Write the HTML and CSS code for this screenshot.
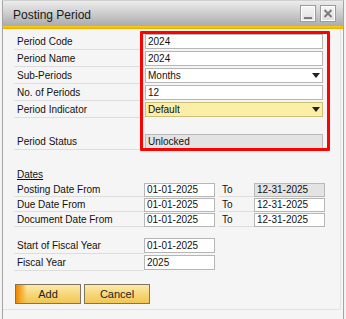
FILE: index.html
```html
<!DOCTYPE html>
<html>
<head>
<meta charset="utf-8">
<link rel="stylesheet" href="styles.css">
</head>
<body>
<div class="window">
  <div class="titlebar">
    <span class="title">Posting Period</span>
    <div class="wbtns">
      <span class="wbtn"><svg width="14" height="15" viewBox="0 0 14 15"><rect x="3" y="11" width="8" height="2" fill="#7c7c7c"/></svg></span>
      <span class="wbtn"><svg width="14" height="15" viewBox="0 0 14 15"><path d="M3.5 4 L10.5 11 M10.5 4 L3.5 11" stroke="#7c7c7c" stroke-width="2"/></svg></span>
    </div>
  </div>
  <div class="stripe"></div>
  <div class="content">
    <div class="section">
      <div class="row"><div class="label">Period Code</div><div class="field">2024</div></div>
      <div class="row"><div class="label">Period Name</div><div class="field">2024</div></div>
      <div class="row"><div class="label">Sub-Periods</div><div class="field select"><span>Months</span><svg class="arrow" width="8" height="5" viewBox="0 0 8 5"><path d="M0 0 H8 L4 5 Z" fill="#222"/></svg></div></div>
      <div class="row"><div class="label">No. of Periods</div><div class="field">12</div></div>
      <div class="row"><div class="label">Period Indicator</div><div class="field select yellow"><span>Default</span><svg class="arrow" width="8" height="5" viewBox="0 0 8 5"><path d="M0 0 H8 L4 5 Z" fill="#222"/></svg></div></div>
      <div class="spacer"></div>
      <div class="row"><div class="label">Period Status</div><div class="field disabled">Unlocked</div></div>
    </div>

    <div class="dates">
      <div class="dates-title">Dates</div>
      <div class="drow"><div class="label dl">Posting Date From</div><div class="field date">01-01-2025</div><div class="to">To</div><div class="field date disabled">12-31-2025</div></div>
      <div class="drow"><div class="label dl">Due Date From</div><div class="field date">01-01-2025</div><div class="to">To</div><div class="field date">12-31-2025</div></div>
      <div class="drow"><div class="label dl">Document Date From</div><div class="field date">01-01-2025</div><div class="to">To</div><div class="field date">12-31-2025</div></div>
    </div>

    <div class="fiscal">
      <div class="row"><div class="label dl">Start of Fiscal Year</div><div class="field date tall">01-01-2025</div></div>
      <div class="row"><div class="label dl">Fiscal Year</div><div class="field date tall">2025</div></div>
    </div>

    <div class="buttons">
      <button class="btn focus">Add</button>
      <button class="btn">Cancel</button>
    </div>

    <div class="highlight"></div>
  </div>
</div>
</body>
</html>
```

FILE: styles.css
```css
html, body {
  margin: 0;
  padding: 0;
}
body {
  width: 346px;
  height: 319px;
  overflow: hidden;
  background: #f3f3f3;
  font-family: "Liberation Sans", Arial, sans-serif;
  font-size: 10px;
  color: #111111;
}
.window {
  margin-left: 2px;
  width: 340px;
  height: 330px;
  border-left: 1px solid #a4a4a4;
  border-right: 1px solid #a4a4a4;
  border-top: 1px solid #cfcfcf;
  background: #f5f5f5;
}
.titlebar {
  height: 25px;
  box-sizing: border-box;
  background: linear-gradient(#ececec, #d0d0d0 45%, #aaaaaa);
  display: flex;
  align-items: center;
  justify-content: space-between;
  padding: 2px 7px 0 10px;
}
.title {
  font-size: 12px;
  color: #1a1a1a;
}
.wbtns {
  display: flex;
  gap: 4px;
  margin-top: -3px;
}
.wbtn {
  width: 14px;
  height: 15px;
  border: 1px solid #9c9c9c;
  box-shadow: inset 0 0 0 1px #ffffff;
  background: linear-gradient(#f6f6f6, #dedede);
  display: block;
}
.wbtn svg { display: block; }
.stripe {
  height: 3px;
  background: linear-gradient(#f9cf1a, #f0a900);
}
.content {
  position: relative;
  padding: 4px 0 0 11px;
  height: 276px;
  width: 326px;
  border-right: 1px solid #e2e2e2;
  border-bottom: 1px solid #e2e2e2;
}
.row {
  display: flex;
  align-items: center;
  height: 17px;
}
.label {
  width: 131px;
  height: 100%;
  box-sizing: border-box;
  border-bottom: 1px solid #dddddd;
  padding-left: 3px;
  display: flex;
  align-items: center;
  flex-shrink: 0;
}
.field {
  width: 178px;
  height: 15px;
  box-sizing: border-box;
  border: 1px solid #b6b6b6;
  background: #ffffff;
  padding-left: 2px;
  display: flex;
  align-items: center;
  flex-shrink: 0;
}
.select {
  justify-content: space-between;
  padding-right: 2px;
}
.arrow { display: block; }
.yellow {
  background: #fbeea6;
  border-color: #cdbf78;
}
.disabled {
  background: #e3e3e3;
  border-color: #b9b9b9;
}
.spacer {
  height: 15px;
}
.dates {
  margin-top: 17px;
}
.dates-title {
  height: 15px;
  padding-left: 3px;
  display: flex;
  align-items: center;
  text-decoration: underline;
}
.drow {
  display: flex;
  align-items: center;
  height: 15px;
}
.dl {
  width: 130px;
}
.date {
  width: 71px;
  height: 14px;
}
.tall {
  height: 15px;
}
.to {
  width: 35px;
  margin-left: 4px;
  height: 100%;
  box-sizing: border-box;
  border-bottom: 1px solid #dddddd;
  padding-left: 3px;
  display: flex;
  align-items: center;
}
.fiscal {
  margin-top: 10px;
}
.buttons {
  display: flex;
  gap: 3px;
  margin-top: 13px;
  margin-left: 1px;
}
.btn {
  width: 66px;
  height: 20px;
  border: 1px solid #7e7462;
  background: linear-gradient(#fcebaa, #f6d676 55%, #f0c653);
  font-family: "Liberation Sans", Arial, sans-serif;
  font-size: 11px;
  color: #1e1e1e;
  padding: 0;
  border-radius: 0;
}
.focus {
  background:
    linear-gradient(to right, #ee8500 0, #f3ad2c 5px, rgba(246, 214, 118, 0) 11px),
    linear-gradient(#fcebaa, #f6d676 55%, #f0c653);
}
.highlight {
  position: absolute;
  left: 137px;
  top: 2px;
  width: 190px;
  height: 120px;
  box-sizing: border-box;
  border: 3px solid #ff0000;
  border-radius: 1px;
}
```
